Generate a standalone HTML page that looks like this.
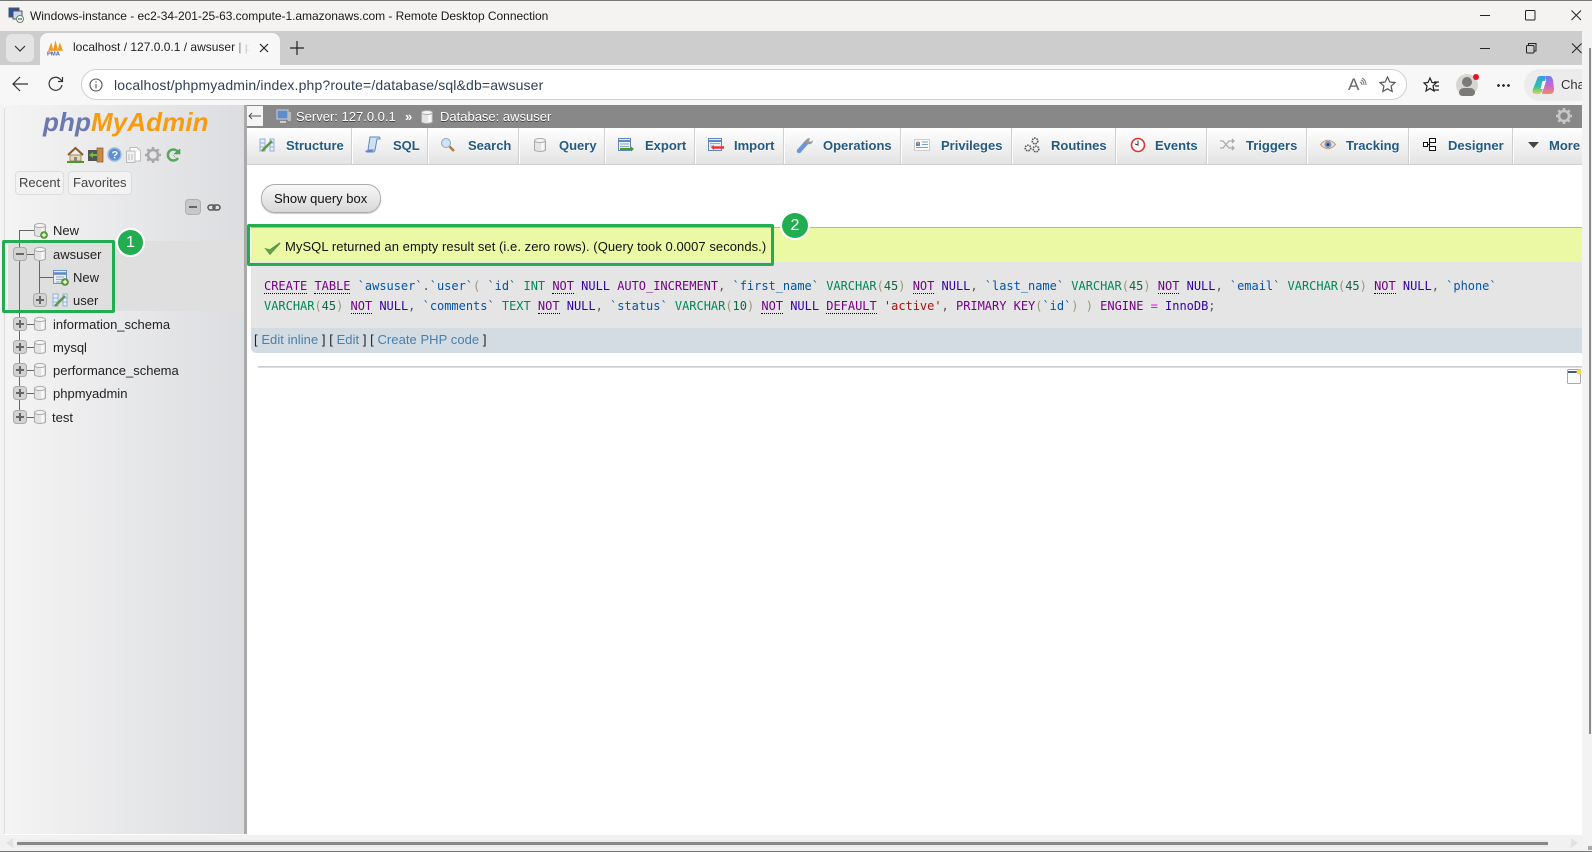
<!DOCTYPE html>
<html><head><meta charset="utf-8"><title>phpMyAdmin</title>
<style>
html,body{margin:0;padding:0;width:1592px;height:852px;overflow:hidden;background:#fff;font-family:"Liberation Sans",sans-serif}
.a{position:absolute}
.t{position:absolute;white-space:pre;line-height:16px}
svg{position:absolute;overflow:visible}
.tabtxt{position:absolute;top:138px;font-size:13px;font-weight:bold;color:#235a81;text-shadow:0 1px 0 #fff;line-height:16px;white-space:pre}
.sep{position:absolute;top:128px;width:1px;height:36px;background:#fff;border-left:1px solid #d0d0d0}
.tree{position:absolute;left:53px;font-size:13px;color:#222;line-height:16px;white-space:pre}
.mono{position:absolute;left:264px;font:12px/16px "DejaVu Sans Mono",monospace;letter-spacing:-.02px;white-space:pre;color:#30a}
.k{color:#708}.d{color:#708;border-bottom:1px dotted #000}.s{color:#05a}.v{color:#085}.n{color:#164}.b{color:#997}.r{color:#a11}.p{color:#555}.m{color:#f0f}
.ln{color:#4a80a8}
</style></head><body>
<svg width="0" height="0"><defs>
<symbol id="db" viewBox="0 0 12 14" overflow="visible"><path d="M.5 2.500v9c0 1.200 2.500 2 5.500 2s5.500-.8 5.500-2v-9z" fill="#e4e4e4" stroke="#aaa"/><ellipse cx="6" cy="2.500" rx="5.500" ry="2" fill="#f4f4f4" stroke="#aaa"/><path d="M8.500 5v7" stroke="#fff" stroke-width="2"/></symbol>
<symbol id="plus" viewBox="0 0 14 14"><rect x=".5" y=".5" width="13" height="13" rx="3" fill="#d2d2d2" stroke="#aaa"/><path d="M3 7h8M7 3v8" stroke="#666" stroke-width="2"/></symbol>
<symbol id="minus" viewBox="0 0 14 14"><rect x=".5" y=".5" width="13" height="13" rx="3" fill="#d2d2d2" stroke="#aaa"/><path d="M3 7h8" stroke="#666" stroke-width="2"/></symbol>
<symbol id="struct" viewBox="0 0 16 16"><path d="M1 2h5v12H1zM11 2h4v12h-4z" fill="#e8f0fb" stroke="#8fb0dc"/><path d="M1 6h5M1 10h5M11 6h4M11 10h4" stroke="#8fb0dc"/><path d="M3 14 13 4" stroke="#5c9a3a" stroke-width="2.500"/></symbol>
<symbol id="gadd" viewBox="0 0 8 8"><circle cx="4" cy="4" r="3.500" fill="#5da32f" stroke="#3d7a1f" stroke-width=".6"/><path d="M2 4h4M4 2v4" stroke="#fff" stroke-width="1.200"/></symbol>
<symbol id="gear" viewBox="0 0 16 16"><circle cx="8" cy="8" r="5" fill="none" stroke="currentColor" stroke-width="2.500"/><path d="M8 0v3M8 13v3M0 8h3M13 8h3M2.300 2.300l2.100 2.100M11.600 11.600l2.100 2.100M2.300 13.700l2.100-2.100M11.600 4.400l2.100-2.100" stroke="currentColor" stroke-width="2.500"/></symbol>
</defs></svg>

<!-- window title bar -->
<div class="a" style="left:0;top:0;width:1592px;height:31px;background:#f5f3f2;border-top:1px solid #777;box-sizing:border-box"></div>
<svg style="left:8px;top:7px" width="16" height="16" viewBox="0 0 16 16"><rect x="1" y="1" width="10" height="9" fill="#2b4fb0" stroke="#555"/><rect x="5" y="4" width="9" height="8" fill="#cfd6e6" stroke="#555"/><circle cx="12" cy="12" r="3.500" fill="#fff" stroke="#777"/><path d="M10 12h4" stroke="#2a9d3a" stroke-width="1.500"/></svg>
<div class="t" style="left:30px;top:8px;font-size:12px;color:#1a1a1a;letter-spacing:-.03px">Windows-instance - ec2-34-201-25-63.compute-1.amazonaws.com - Remote Desktop Connection</div>
<svg style="left:1480px;top:8px" width="104" height="16" fill="none" stroke="#222" stroke-width="1"><path d="M0 7.500h10"/><rect x="45.500" y="2.500" width="9.500" height="9.500" rx="1"/><path d="M91.500 2.500l9.500 9.500M101 2.500l-9.500 9.500"/></svg>

<!-- tab strip -->
<div class="a" style="left:0;top:31px;width:1582px;height:34px;background:#cdcdcd"></div>
<div class="a" style="left:6px;top:34px;width:28px;height:28px;background:#e4e4e4;border-radius:6px"></div>
<svg style="left:14px;top:45px" width="12" height="8" fill="none" stroke="#333" stroke-width="1.200"><path d="M1 1l5 5 5-5"/></svg>
<div class="a" style="left:40px;top:33px;width:240px;height:32px;background:#f7f7f7;border-radius:8px 8px 0 0"></div>
<svg style="left:47px;top:39px" width="17" height="17" viewBox="0 0 16 16"><path d="M1 11 4 3l2 8zM5.500 11 8 1l2.500 10zM10 11l2-8 3 8z" fill="#f39a1c"/><text x="0" y="15.500" font-size="5.500" font-weight="bold" font-family="Liberation Sans" fill="#4a5f9e">PMA</text></svg>
<div class="t" style="left:73px;top:39px;width:177px;overflow:hidden;font-size:12px;color:#222;-webkit-mask-image:linear-gradient(90deg,#000 90%,transparent)">localhost / 127.0.0.1 / awsuser | phpMyAdmin</div>
<svg style="left:259px;top:43px" width="10" height="10" fill="none" stroke="#222" stroke-width="1.200"><path d="M1 1l8 8M9 1l-8 8"/></svg>
<svg style="left:290px;top:41px" width="14" height="14" fill="none" stroke="#222" stroke-width="1.200"><path d="M0 7h14M7 0v14"/></svg>
<svg style="left:1480px;top:41px" width="104" height="16" fill="none" stroke="#222" stroke-width="1"><path d="M0 7.500h10"/><rect x="46.500" y="4.500" width="7.500" height="7.500" rx="1"/><path d="M48.500 4.500V2.500h7.500v7.500h-2"/><path d="M92 2.500l9.500 9.500M101.500 2.500L92 12"/></svg>

<!-- toolbar -->
<div class="a" style="left:0;top:65px;width:1582px;height:40px;background:#f7f7f7"></div>
<svg style="left:12px;top:76px" width="17" height="16" fill="none" stroke="#333" stroke-width="1.200"><path d="M16 8H1M8 1 1 8l7 7"/></svg>
<svg style="left:48px;top:76px" width="16" height="16" fill="none" stroke="#333" stroke-width="1.200"><path d="M14 9a6.500 6.500 0 1 1-2-6l2 2M14.500 1v4.500H10"/></svg>
<div class="a" style="left:81px;top:69px;width:1326px;height:31px;background:#fff;border:1px solid #d0d0d0;border-radius:16px;box-sizing:border-box"></div>
<svg style="left:89px;top:78px" width="14" height="14" fill="none" stroke="#555" stroke-width="1.100"><circle cx="7" cy="7" r="6"/><path d="M7 6v4.500M7 3.500v1.300"/></svg>
<div class="t" style="left:114px;top:77px;font-size:14px;color:#2f3f55;letter-spacing:.15px">localhost/phpmyadmin/index.php?route=/database/sql&amp;db=awsuser</div>
<div class="t" style="left:1348px;top:77px;font-size:17px;color:#666">A</div>
<svg style="left:1360px;top:77px" width="8" height="11" fill="none" stroke="#777"><path d="M0 5q2 1 2 3M1 3q3 1 3 5M2 1q4 2 4 7"/></svg>
<svg style="left:1379px;top:76px" width="17" height="17" fill="none" stroke="#555" stroke-width="1.200"><path d="M8.500 1l2.300 5 5.200.6-3.900 3.500 1.100 5.400-4.700-2.700-4.700 2.700 1.100-5.400L1 6.600 6.200 6z"/></svg>
<svg style="left:1423px;top:77px" width="17" height="17" fill="none" stroke="#222" stroke-width="1.200"><path d="M7 1l2 4.500 4 .5-3 3 1 5-4-2.500L3 14l1-5-3-3 4-.5zM11 5h5M12 9h4M11 13h5"/></svg>
<div class="a" style="left:1456px;top:74px;width:22px;height:22px;border-radius:50%;background:#d8d6d2"></div>
<div class="a" style="left:1462px;top:77px;width:10px;height:10px;border-radius:50%;background:#7b7a78"></div>
<div class="a" style="left:1459px;top:88px;width:16px;height:8px;border-radius:8px 8px 6px 6px;background:#7b7a78"></div>
<div class="a" style="left:1473px;top:74px;width:6px;height:6px;border-radius:50%;background:#e81123"></div>
<div class="a" style="left:1496px;top:84px;width:14px;height:3px;background:radial-gradient(circle,#333 1.300px,transparent 1.500px) 0 0/5px 3px"></div>
<div class="a" style="left:1524px;top:69px;width:58px;height:32px;background:#ececec;border-radius:16px 0 0 16px"></div>
<svg style="left:1532px;top:74px" width="22" height="22" viewBox="0 0 22 22"><defs><linearGradient id="cl" x1="0" y1="0" x2="0" y2="1"><stop offset="0" stop-color="#2f9fe8"/><stop offset=".6" stop-color="#35c0a0"/><stop offset="1" stop-color="#d6d84a"/></linearGradient><linearGradient id="cr" x1="0" y1="0" x2="0" y2="1"><stop offset="0" stop-color="#6a7cf0"/><stop offset=".5" stop-color="#c566d8"/><stop offset="1" stop-color="#f58a6a"/></linearGradient></defs><path d="M8 2h5c1 0 1 1 1 1l-4 14c-1 2-2 3-4 3H4c-3 0-4-2-3-5L5 5c.5-2 1.500-3 3-3z" fill="url(#cl)"/><path d="M14 2h3c2 0 3 1 4 4l1 9c0 3-1 5-4 5h-7c-1 0-1-1-1-1l4-13z" fill="url(#cr)"/><path d="M10.500 7h3.500l-2.500 8H8.500z" fill="#fff"/></svg>
<div class="t" style="left:1561px;top:77px;width:21px;overflow:hidden;font-size:13px;color:#333">Chat</div>

<!-- right strip / scrollbar -->
<div class="a" style="left:1582px;top:31px;width:10px;height:821px;background:#f3f3f3"></div>
<div class="a" style="left:1589px;top:48px;width:2px;height:686px;background:#8a8a8a"></div>
<!-- left strip -->
<div class="a" style="left:0;top:105px;width:4px;height:730px;background:#f3f3f3"></div>

<!-- sidebar -->
<div class="a" style="left:4px;top:105px;width:240px;height:729px;background:linear-gradient(90deg,#f4f4f4,#dcdde0);border-left:1px solid #ddd;box-sizing:border-box;border-radius:5px 0 0 0"></div>
<div class="a" style="left:244px;top:105px;width:3px;height:729px;background:#aaa"></div>
<div class="a" style="left:8px;top:241px;width:236px;height:70px;background:#dfdfdf"></div>
<div class="t" style="left:43px;top:107px;font:italic bold 26px/30px 'Liberation Sans',sans-serif;color:#f89c0e;letter-spacing:.1px"><span style="color:#6c78af">php</span>MyAdmin</div>
<!-- nav icons -->
<svg style="left:67px;top:146px" width="17" height="17" viewBox="0 0 17 17"><path d="M1 9 8.500 2 16 9" fill="none" stroke="#8a5a2b" stroke-width="2"/><path d="M3 9h11v6H3z" fill="#e8d8b8" stroke="#8a6a3a" stroke-width=".7"/><rect x="7" y="11" width="3" height="4" fill="#888"/><path d="M0 16h17" stroke="#4a9a2a" stroke-width="2"/></svg>
<svg style="left:87px;top:147px" width="17" height="16" viewBox="0 0 17 16"><path d="M10 1h6v14h-6z" fill="#c98a45" stroke="#8a5a22" stroke-width=".7"/><path d="M1 3h9v11H1z" fill="#555"/><path d="M2 8l4-3v2h4v2H6v2z" fill="#6cc23a"/></svg>
<svg style="left:107px;top:147px" width="15" height="15" viewBox="0 0 15 15"><circle cx="7.500" cy="7.500" r="6.500" fill="#5a8fd6" stroke="#9ab9e0" stroke-width="1.500"/><text x="4.500" y="11.500" font-size="11" font-weight="bold" font-family="Liberation Sans" fill="#fff">?</text></svg>
<svg style="left:126px;top:147px" width="15" height="16" viewBox="0 0 15 16"><path d="M4 .5h7l3.500 3.500v10H4z" fill="#fff" stroke="#bbb"/><path d="M.5 4H9v11.500H.5z" fill="#f2f2f2" stroke="#bbb"/><path d="M3 7v6M6 7v6" stroke="#bbb"/></svg>
<svg style="left:145px;top:147px;color:#a8a8a8" width="16" height="16"><use href="#gear"/></svg>
<svg style="left:166px;top:147px" width="14" height="15" viewBox="0 0 14 15" fill="none"><path d="M12 5A5.500 5.500 0 1 0 12 11" stroke="#58a858" stroke-width="2.500"/><path d="M8 7h6V2zM7 8l2.500 2.500" fill="#58a858" stroke="#3f8a3f" stroke-width=".5"/></svg>

<div class="a" style="left:15px;top:171px;width:49px;height:24px;background:#f2f2f2;border:1px solid #ddd;border-radius:4px;box-sizing:border-box"></div>
<div class="a" style="left:68px;top:171px;width:64px;height:24px;background:#f2f2f2;border:1px solid #ddd;border-radius:4px;box-sizing:border-box"></div>
<div class="t" style="left:19px;top:175px;font-size:13px;color:#444">Recent</div>
<div class="t" style="left:73px;top:175px;font-size:13px;color:#444">Favorites</div>
<div class="a" style="left:185px;top:199px;width:16px;height:16px;background:#c8c8c8;border:1px solid #b0b0b0;border-radius:4px;box-sizing:border-box"></div>
<div class="a" style="left:189px;top:206px;width:8px;height:2px;background:#666"></div>
<svg style="left:207px;top:204px" width="14" height="7" fill="none" stroke="#555" stroke-width="1.500"><rect x="1" y="1" width="7" height="5" rx="2.500"/><rect x="6" y="1" width="7" height="5" rx="2.500"/></svg>

<!-- tree -->
<div class="a" style="left:19px;top:230px;width:1px;height:187px;background:#666"></div>
<div class="a" style="left:19px;top:230px;width:16px;height:1px;background:#666"></div>
<div class="a" style="left:26px;top:254px;width:9px;height:1px;background:#666"></div>
<div class="a" style="left:26px;top:324px;width:9px;height:1px;background:#666"></div>
<div class="a" style="left:26px;top:347px;width:9px;height:1px;background:#666"></div>
<div class="a" style="left:26px;top:370px;width:9px;height:1px;background:#666"></div>
<div class="a" style="left:26px;top:393px;width:9px;height:1px;background:#666"></div>
<div class="a" style="left:26px;top:417px;width:9px;height:1px;background:#666"></div>
<div class="a" style="left:39px;top:261px;width:1px;height:32px;background:#666"></div>
<div class="a" style="left:39px;top:277px;width:14px;height:1px;background:#666"></div>
<svg style="left:34px;top:223px" width="12" height="14"><use href="#db"/></svg>
<svg style="left:40px;top:231px" width="8" height="8"><use href="#gadd"/></svg>
<svg style="left:13px;top:247px" width="14" height="14"><use href="#minus"/></svg>
<svg style="left:34px;top:247px" width="12" height="14"><use href="#db"/></svg>
<svg style="left:53px;top:270px" width="14" height="14" viewBox="0 0 14 14"><rect x=".5" y=".5" width="13" height="13" fill="#e6eefa" stroke="#6c93c9"/><path d="M.5 3.500h13" stroke="#5f87c0" stroke-width="2.500"/><path d="M3 7h8M3 9.500h8M3 12h8" stroke="#9ab"/></svg>
<svg style="left:61px;top:278px" width="8" height="8"><use href="#gadd"/></svg>
<svg style="left:33px;top:293px" width="14" height="14"><use href="#plus"/></svg>
<svg style="left:52px;top:292px" width="16" height="16"><use href="#struct"/></svg>
<svg style="left:13px;top:317px" width="14" height="14"><use href="#plus"/></svg>
<svg style="left:34px;top:317px" width="12" height="14"><use href="#db"/></svg>
<svg style="left:13px;top:340px" width="14" height="14"><use href="#plus"/></svg>
<svg style="left:34px;top:340px" width="12" height="14"><use href="#db"/></svg>
<svg style="left:13px;top:363px" width="14" height="14"><use href="#plus"/></svg>
<svg style="left:34px;top:363px" width="12" height="14"><use href="#db"/></svg>
<svg style="left:13px;top:386px" width="14" height="14"><use href="#plus"/></svg>
<svg style="left:34px;top:386px" width="12" height="14"><use href="#db"/></svg>
<svg style="left:13px;top:410px" width="14" height="14"><use href="#plus"/></svg>
<svg style="left:34px;top:410px" width="12" height="14"><use href="#db"/></svg>
<div class="tree" style="top:223px">New</div>
<div class="tree" style="top:247px">awsuser</div>
<div class="tree" style="top:270px;left:73px">New</div>
<div class="tree" style="top:293px;left:73px">user</div>
<div class="tree" style="top:317px">information_schema</div>
<div class="tree" style="top:340px">mysql</div>
<div class="tree" style="top:363px">performance_schema</div>
<div class="tree" style="top:386px">phpmyadmin</div>
<div class="tree" style="top:410px;left:52px">test</div>

<!-- server bar -->
<div class="a" style="left:247px;top:105px;width:1335px;height:23px;background:#888"></div>
<div class="a" style="left:247px;top:106px;width:16px;height:20px;background:#f5f5f5"></div>
<svg style="left:248px;top:112px" width="14" height="8" fill="none" stroke="#555"><path d="M13 4H1M4 1 1 4l3 3"/></svg>
<svg style="left:276px;top:109px" width="15" height="15" viewBox="0 0 15 15"><rect x="1" y="1" width="11" height="9" fill="#5f8dc9" stroke="#ccd"/><rect x="12" y="3" width="3" height="9" fill="#bbb"/><path d="M4 12h6v2H4z" fill="#ccc"/></svg>
<div class="t" style="left:296px;top:109px;font-size:13px;color:#fff;text-shadow:0 1px 0 #444">Server: 127.0.0.1</div>
<div class="t" style="left:405px;top:109px;font-size:13px;color:#fff;font-weight:bold">»</div>
<svg style="left:421px;top:110px" width="12" height="14"><use href="#db"/></svg>
<div class="t" style="left:440px;top:109px;font-size:13px;color:#fff;text-shadow:0 1px 0 #444">Database: awsuser</div>
<svg style="left:1556px;top:108px;color:#c8c8c8" width="16" height="16"><use href="#gear"/></svg>

<!-- tabs -->
<div class="a" style="left:247px;top:128px;width:1335px;height:37px;background:linear-gradient(#fff,#e3e3e3);border-bottom:1px solid #cfcfcf;box-sizing:border-box"></div>
<div class="sep" style="left:351px"></div><div class="sep" style="left:427px"></div><div class="sep" style="left:518px"></div><div class="sep" style="left:604px"></div><div class="sep" style="left:694px"></div><div class="sep" style="left:783px"></div><div class="sep" style="left:900px"></div><div class="sep" style="left:1011px"></div><div class="sep" style="left:1115px"></div><div class="sep" style="left:1206px"></div><div class="sep" style="left:1306px"></div><div class="sep" style="left:1408px"></div><div class="sep" style="left:1512px"></div>
<svg style="left:259px;top:137px" width="16" height="16"><use href="#struct"/></svg>
<div class="tabtxt" style="left:286px">Structure</div>
<svg style="left:365px;top:136px" width="16" height="17" viewBox="0 0 16 17"><path d="M5 1h9c1 0 1 1 1 2h-3l-2 11c0 1-1 2-2 2H2c-1 0-1-1-1-1h6l1-1H3z" fill="#cfe0f5" stroke="#5f87c0"/></svg>
<div class="tabtxt" style="left:393px">SQL</div>
<svg style="left:440px;top:137px" width="15" height="15" viewBox="0 0 15 15"><circle cx="6" cy="6" r="4.500" fill="#cfe3f8" stroke="#8aa"/><path d="M9.500 9.500l4.500 4.500" stroke="#b5793a" stroke-width="2.500"/></svg>
<div class="tabtxt" style="left:468px">Search</div>
<svg style="left:534px;top:138px" width="12" height="14"><use href="#db"/></svg>
<div class="tabtxt" style="left:559px">Query</div>
<svg style="left:618px;top:138px" width="16" height="14" viewBox="0 0 16 14"><rect x=".5" y=".5" width="12" height="12" fill="#e6eefa" stroke="#5f87c0"/><path d="M.5 3h12" stroke="#5f87c0" stroke-width="2"/><path d="M2 6h9M2 8.500h9" stroke="#9ab"/><path d="M2 11h11" stroke="#4a9a2a" stroke-width="2"/><path d="M13 8.500l3 2.500-3 2.500z" fill="#4a9a2a"/></svg>
<div class="tabtxt" style="left:645px">Export</div>
<svg style="left:708px;top:138px" width="16" height="14" viewBox="0 0 16 14"><rect x=".5" y=".5" width="13" height="12" fill="#e6eefa" stroke="#5f87c0"/><path d="M.5 3h13" stroke="#5f87c0" stroke-width="2"/><path d="M2 5.500h10M2 8h3" stroke="#9ab"/><path d="M5 9.500h11" stroke="#e33" stroke-width="2.500"/><path d="M6 7 3 9.500 6 12z" fill="#e33"/></svg>
<div class="tabtxt" style="left:734px">Import</div>
<svg style="left:797px;top:137px" width="17" height="16" viewBox="0 0 17 16"><path d="M2 14 10 5" stroke="#6f97d3" stroke-width="4.500" stroke-linecap="round"/><path d="M9 6c-1-3 1-5 4-5l-1 3 2 1 2-2c0 3-2 5-5 4z" fill="#999"/></svg>
<div class="tabtxt" style="left:823px">Operations</div>
<svg style="left:914px;top:139px" width="16" height="12" viewBox="0 0 16 12"><rect x=".5" y=".5" width="15" height="11" fill="#fafbfd" stroke="#ccc"/><rect x="2" y="3" width="4" height="4" fill="#5f87c0"/><rect x="3" y="2.500" width="2" height="2.500" fill="#d79a5a"/><path d="M8 3h6M8 5.500h6M2 8.500h12" stroke="#7f9fc8"/></svg>
<div class="tabtxt" style="left:941px">Privileges</div>
<svg style="left:1024px;top:137px" width="17" height="16" viewBox="0 0 17 16" fill="none" stroke="#555" stroke-width="1.600" stroke-dasharray="1.500 .9"><circle cx="11" cy="4" r="2.800"/><circle cx="4" cy="11" r="2.800"/><circle cx="12" cy="12" r="2.800"/></svg>
<div class="tabtxt" style="left:1051px">Routines</div>
<svg style="left:1130px;top:137px" width="16" height="16" viewBox="0 0 16 16"><circle cx="8" cy="8" r="6.500" fill="#fff" stroke="#d33" stroke-width="1.600"/><path d="M8 3.500V8l-3-1" fill="none" stroke="#333"/></svg>
<div class="tabtxt" style="left:1155px">Events</div>
<svg style="left:1220px;top:139px" width="15" height="11" viewBox="0 0 15 11" fill="none" stroke="#aaa" stroke-width="1.300"><path d="M0 2h3l6 7h4M0 9h3l6-7h4M12 0l2 2-2 2M12 7l2 2-2 2"/></svg>
<div class="tabtxt" style="left:1246px">Triggers</div>
<svg style="left:1320px;top:139px" width="16" height="11" viewBox="0 0 16 11"><path d="M.5 5.500Q8-3 15.500 5.500 8 14 .5 5.500z" fill="#f5e4d5" stroke="#c89a72"/><circle cx="8" cy="5.500" r="3.500" fill="#6a93d8"/><circle cx="8" cy="5.500" r="1.300" fill="#234"/></svg>
<div class="tabtxt" style="left:1346px">Tracking</div>
<svg style="left:1423px;top:137px" width="14" height="15" viewBox="0 0 14 15" fill="none" stroke="#111"><rect x="6.500" y="1.500" width="6" height="4" fill="#fff"/><rect x="6.500" y="9.500" width="6" height="4" fill="#fff"/><rect x=".5" y="5.500" width="4" height="4" fill="#fff"/><path d="M4.500 7.500h2M6.500 3.500v8"/></svg>
<div class="tabtxt" style="left:1448px">Designer</div>
<svg style="left:1528px;top:142px" width="11" height="6"><path d="M0 0h11L5.500 6z" fill="#444"/></svg>
<div class="tabtxt" style="left:1549px">More</div>

<!-- show query box -->
<div class="a" style="left:261px;top:184px;width:120px;height:29px;border:1px solid #aaa;border-radius:14px;background:linear-gradient(#f8f8f8,#d8d8d8);box-sizing:border-box;box-shadow:0 1px 1px #ccc"></div>
<div class="t" style="left:274px;top:191px;font-size:13px;color:#111">Show query box</div>

<!-- success -->
<div class="a" style="left:251px;top:227px;width:1331px;height:35px;background:#ebf8a4;border-top:1px solid #a2d246;box-sizing:border-box"></div>
<svg style="left:265px;top:242px" width="16" height="13" viewBox="0 0 16 13"><path d="M1 7l4 5L15 1 5 8z" fill="#6aa84f" stroke="#5a9a45" stroke-width="1.400"/></svg>
<div class="t" style="left:285px;top:239px;font-size:13px;letter-spacing:.06px;color:#111">MySQL returned an empty result set (i.e. zero rows). (Query took 0.0007 seconds.)</div>

<!-- sql -->
<div class="a" style="left:251px;top:262px;width:1331px;height:66px;background:#e5e5e5"></div>
<div class="mono" style="top:278px"><span class="d">CREATE</span> <span class="d">TABLE</span> <span class="s">`awsuser`</span><span class="p">.</span><span class="s">`user`</span><span class="b">(</span> <span class="s">`id`</span> <span class="v">INT</span> <span class="d">NOT</span> NULL <span class="k">AUTO_INCREMENT</span><span class="p">,</span> <span class="s">`first_name`</span> <span class="v">VARCHAR</span><span class="b">(</span><span class="n">45</span><span class="b">)</span> <span class="d">NOT</span> NULL<span class="p">,</span> <span class="s">`last_name`</span> <span class="v">VARCHAR</span><span class="b">(</span><span class="n">45</span><span class="b">)</span> <span class="d">NOT</span> NULL<span class="p">,</span> <span class="s">`email`</span> <span class="v">VARCHAR</span><span class="b">(</span><span class="n">45</span><span class="b">)</span> <span class="d">NOT</span> NULL<span class="p">,</span> <span class="s">`phone`</span></div>
<div class="mono" style="top:298px"><span class="v">VARCHAR</span><span class="b">(</span><span class="n">45</span><span class="b">)</span> <span class="d">NOT</span> NULL<span class="p">,</span> <span class="s">`comments`</span> <span class="v">TEXT</span> <span class="d">NOT</span> NULL<span class="p">,</span> <span class="s">`status`</span> <span class="v">VARCHAR</span><span class="b">(</span><span class="n">10</span><span class="b">)</span> <span class="d">NOT</span> NULL <span class="d">DEFAULT</span> <span class="r">'active'</span><span class="p">,</span> <span class="k">PRIMARY KEY</span><span class="b">(</span><span class="s">`id`</span><span class="b">)</span> <span class="b">)</span> <span class="k">ENGINE</span> <span class="m">=</span> InnoDB<span class="p">;</span></div>

<!-- action bar -->
<div class="a" style="left:251px;top:328px;width:1331px;height:25px;background:#d3dce3;border-radius:0 0 0 5px"></div>
<div class="t" style="left:254px;top:332px;font-size:13px;letter-spacing:.05px;color:#222">[ <span class="ln">Edit inline</span> ] [ <span class="ln">Edit</span> ] [ <span class="ln">Create PHP code</span> ]</div>

<div class="a" style="left:258px;top:366px;width:1324px;height:1px;background:#ccc;border-bottom:1px solid #ddd"></div>
<svg style="left:1567px;top:369px" width="14" height="15" viewBox="0 0 14 15"><rect x=".5" y=".5" width="13" height="14" rx="1" fill="#fbfbfb" stroke="#aaa"/><path d="M1 3h9" stroke="#3c5a8a" stroke-width="2"/><circle cx="12" cy="3" r="2.500" fill="#f6dc3c"/></svg>

<!-- bottom bar -->
<div class="a" style="left:0;top:835px;width:1582px;height:17px;background:#f1f1f1"></div>
<div class="a" style="left:17px;top:840px;width:1531px;height:7px;background:#ebebeb"></div>
<div class="a" style="left:17px;top:842px;width:1531px;height:3px;background:#888"></div>
<div class="a" style="left:0;top:851px;width:1592px;height:1px;background:#777"></div>
<svg style="left:6px;top:838px" width="7" height="10"><path d="M7 0v10L0 5z" fill="#e2e2e2"/></svg>
<svg style="left:1571px;top:838px" width="7" height="10"><path d="M0 0v10l7-5z" fill="#e2e2e2"/></svg>
<div class="a" style="left:1588px;top:846px;width:4px;height:4px;background:#aaa"></div>

<!-- green annotations -->
<div class="a" style="left:2px;top:240px;width:113px;height:73px;border:3px solid #22ad50;border-radius:2px;box-sizing:border-box"></div>
<div class="a" style="left:116px;top:228px;width:29px;height:29px;border-radius:50%;background:#22ad50;border:2px solid #fff;box-sizing:border-box;color:#fff;font-size:16px;line-height:25px;text-align:center">1</div>
<div class="a" style="left:247px;top:224px;width:527px;height:42px;border:3px solid #22ad50;border-radius:2px;box-sizing:border-box"></div>
<div class="a" style="left:780px;top:211px;width:30px;height:29px;border-radius:50%;background:#22ad50;border:2px solid #fff;box-sizing:border-box;color:#fff;font-size:16px;line-height:25px;text-align:center">2</div>
</body></html>
